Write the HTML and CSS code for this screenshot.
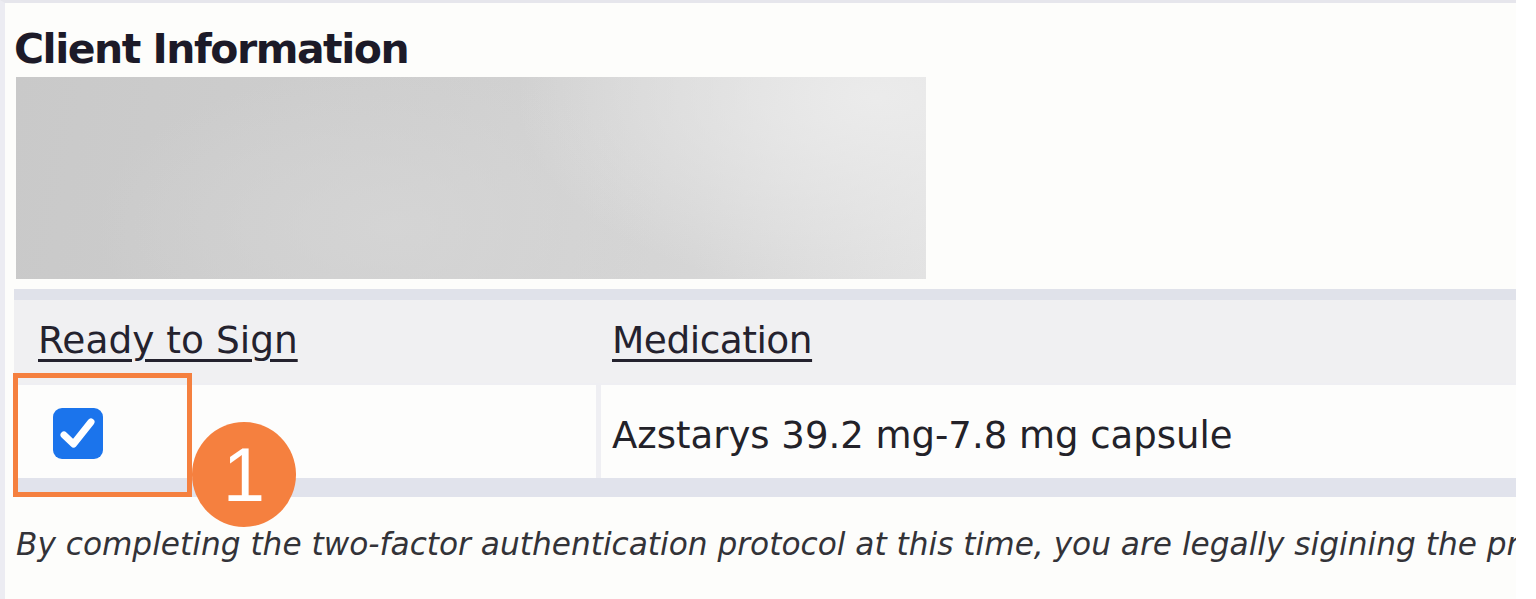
FILE: index.html
```html
<!DOCTYPE html>
<html lang="en">
<head>
<meta charset="utf-8">
<title>Client Information</title>
<link rel="stylesheet" href="styles.css">
</head>
<body>
<div class="page">
  <h2 class="title">Client Information</h2>
  <div class="redacted"></div>
  <div class="grid">
    <div class="band"></div>
    <div class="head-row">
      <div class="hcell hcell-ready"><a class="sort">Ready to Sign</a></div>
      <div class="hcell hcell-med"><a class="sort">Medication</a></div>
    </div>
    <div class="body-row">
      <div class="cell cell-check">
        <span class="checkbox">
          <svg viewBox="0 0 50 50" width="50" height="50" aria-hidden="true"><path d="M11 27 L20.5 36 L38 14" fill="none" stroke="#fff" stroke-width="7" stroke-linecap="round" stroke-linejoin="round"/></svg>
        </span>
      </div>
      <div class="cell cell-med">Azstarys 39.2 mg-7.8 mg capsule</div>
    </div>
    <div class="band band-bottom"></div>
  </div>
  <p class="legal">By completing the two-factor authentication protocol at this time, you are legally sigining the prescription(s) listed above.</p>
</div>
<div class="callout-box"></div>
<div class="callout-badge">1</div>
</body>
</html>
```
FILE: styles.css
```css
html, body {
  margin: 0;
  padding: 0;
  background: #ffffff;
}
body {
  width: 1536px;
  height: 599px;
  overflow: hidden;
  position: relative;
  font-family: "DejaVu Sans", Verdana, sans-serif;
}
.page {
  width: 1516px;
  box-sizing: border-box;
  border-top: 3px solid #e6e6ec;
  border-left: 5px solid #ececf2;
  padding-left: 9px;
  background: #fdfdfb;
  height: 599px;
  overflow: hidden;
}
.title {
  margin: 22px 0 0 0;
  font-size: 41px;
  line-height: 48px;
  font-weight: bold;
  color: #1c1a28;
  letter-spacing: -1.5px;
}
.redacted {
  margin: 4px 0 0 2px;
  width: 910px;
  height: 202px;
  background:
    radial-gradient(ellipse 360px 200px at 860px 20px, rgba(236,236,236,0.95), rgba(236,236,236,0) 100%),
    radial-gradient(ellipse 300px 160px at 380px 150px, rgba(214,214,214,0.8), rgba(214,214,214,0) 100%),
    linear-gradient(100deg, #c9c9c9 0%, #cfcfcf 45%, #d6d6d6 75%, #e2e2e2 100%);
}
.grid {
  margin-top: 10px;
  background: #efeff3;
}
.band {
  height: 11px;
  background: #e0e2ea;
}
.band-bottom {
  height: 19px;
  background: #e1e3ec;
}
.head-row {
  display: grid;
  grid-template-columns: 584px 1fr;
  height: 83px;
  background: #f0f0f2;
}
.hcell {
  padding-top: 18px;
  font-size: 37.5px;
  line-height: 44px;
}
.hcell-ready { padding-left: 24px; }
.hcell-med { padding-left: 14px; letter-spacing: -0.5px; }
.sort {
  color: #24222e;
  text-decoration: underline;
  text-decoration-thickness: 3px;
  text-underline-offset: 6px;
}
.body-row {
  display: grid;
  grid-template-columns: 579px 1fr;
  column-gap: 5px;
  padding: 2px 0 0 3px;
  height: 93px;
}
.cell {
  background: #fdfdfc;
}
.cell-check {
  display: flex;
  align-items: flex-start;
  padding: 23px 0 0 36px;
}
.checkbox {
  display: block;
  width: 50px;
  height: 51px;
  border-radius: 9px;
  background: #1b74ec;
}
.checkbox svg { display: block; }
.cell-med {
  padding: 29px 0 0 11px;
  font-size: 37px;
  line-height: 44px;
  color: #232229;
  white-space: nowrap;
}
.legal {
  margin: 27px 0 0 2px;
  font-size: 31.2px;
  line-height: 40px;
  font-style: italic;
  color: #333338;
  white-space: nowrap;
}
.callout-box {
  position: absolute;
  left: 13px;
  top: 373px;
  width: 179px;
  height: 124px;
  box-sizing: border-box;
  border: 5px solid #f5803f;
}
.callout-badge {
  position: absolute;
  left: 192px;
  top: 422px;
  width: 104px;
  height: 105px;
  border-radius: 50%;
  background: #f5803f;
  color: #ffffff;
  font-family: "Liberation Sans", Arial, sans-serif;
  font-size: 76px;
  line-height: 105px;
  text-align: center;
}
```
